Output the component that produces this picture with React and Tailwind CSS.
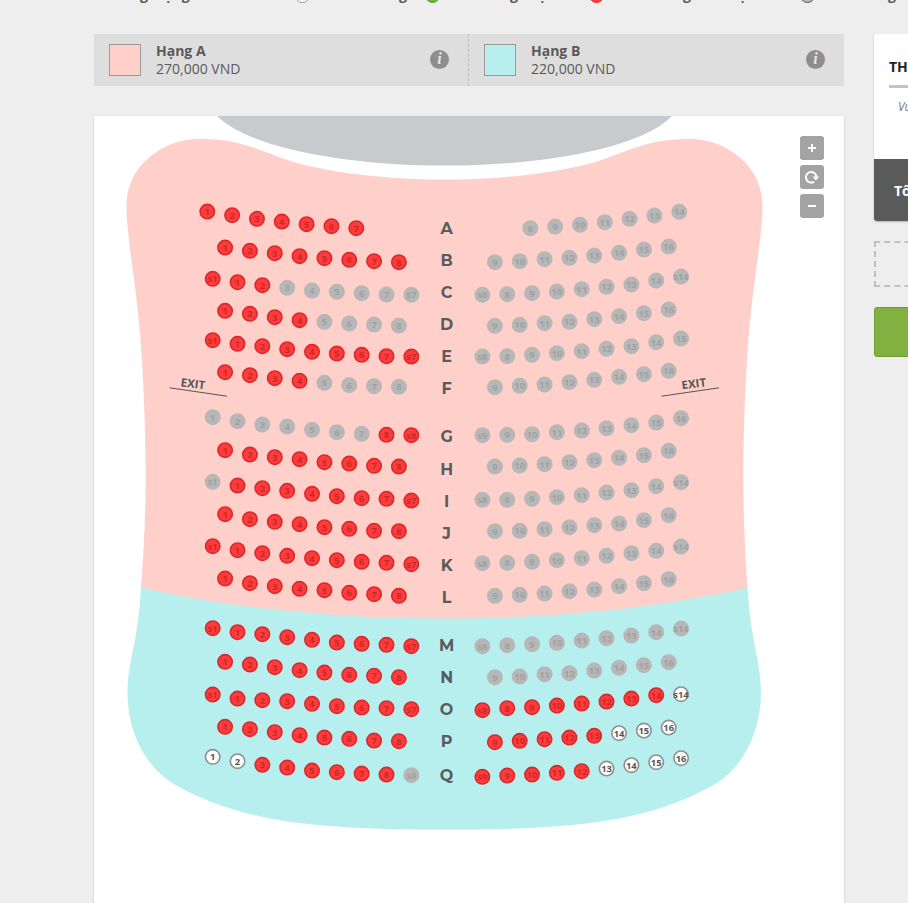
const LEFT_EVEN = 225.1;
const LEFT_ODD = 212.7;
const RIGHT_EVEN = 494.9;
const RIGHT_ODD = 482.4;
const STEP = 24.83;

const nums = (from, to) => Array.from({ length: to - from + 1 }, (_, i) => String(from + i));

const EVEN_L = nums(1, 8);
const EVEN_R = nums(9, 16);
const ODD_L = ['s1', ...nums(1, 7), 's7'];
const ODD_R = ['s8', ...nums(8, 14), 's14'];

// Status strings hold one letter for each seat: r = sold, g = locked, w = free.
// Heights are thirds of a pixel below the top of the block the row belongs to.
const ROWS = [
  { name: 'A', y: 228.7, top: 195,
    left: { x: 207.3, seats: nums(1, 7), status: 'rrrrrrr', ys: [49, 60, 71, 79, 87, 93, 99] },
    right: { x: 530.3, seats: nums(8, 14), status: 'ggggggg', ys: [99, 94, 89, 81, 71, 61, 50] } },
  { name: 'B', y: 260.7, top: 195,
    left: { x: LEFT_EVEN, seats: EVEN_L, status: 'rrrrrrrr', ys: [157, 167, 174, 183, 189, 194, 198, 201] },
    right: { x: RIGHT_EVEN, seats: EVEN_R, status: 'gggggggg', ys: [201, 198, 192, 188, 181, 173, 163, 154] } },
  { name: 'C', y: 292.7, top: 195,
    left: { x: LEFT_ODD, seats: ODD_L, status: 'rrrgggggg', ys: [251, 261, 270, 278, 286, 290, 294, 298, 299] },
    right: { x: RIGHT_ODD, seats: ODD_R, status: 'ggggggggg', ys: [299, 297, 294, 289, 282, 275, 268, 256, 244] } },
  { name: 'D', y: 324.7, top: 195,
    left: { x: LEFT_EVEN, seats: EVEN_L, status: 'rrrrgggg', ys: [347, 356, 366, 375, 380, 385, 388, 391] },
    right: { x: RIGHT_EVEN, seats: EVEN_R, status: 'gggggggg', ys: [392, 389, 384, 380, 372, 363, 354, 343] } },
  { name: 'E', y: 356.7, top: 195,
    left: { x: LEFT_ODD, seats: ODD_L, status: 'rrrrrrrrr', ys: [435, 446, 453, 462, 470, 475, 479, 483, 484] },
    right: { x: RIGHT_ODD, seats: ['s8', ...nums(8, 15)], status: 'ggggggggg', ys: [484, 483, 479, 474, 468, 461, 453, 441, 430] } },
  { name: 'F', y: 388.7, top: 195,
    left: { x: LEFT_EVEN, seats: EVEN_L, status: 'rrrrgggg', ys: [531, 540, 549, 557, 563, 570, 573, 575] },
    right: { x: RIGHT_EVEN, seats: EVEN_R, status: 'gggggggg', ys: [576, 572, 568, 561, 554, 545, 537, 527] } },
  { name: 'G', y: 436.7, top: 400,
    left: { x: LEFT_ODD, seats: [...nums(1, 8), 's8'], status: 'gggggggrr', ys: [51, 63, 73, 79, 89, 96, 101, 104, 105] },
    right: { x: RIGHT_ODD, seats: ['s9', ...nums(9, 16)], status: 'ggggggggg', ys: [105, 104, 102, 96, 91, 84, 75, 67, 54] } },
  { name: 'H', y: 469.7, top: 400,
    left: { x: LEFT_EVEN, seats: EVEN_L, status: 'rrrrrrrr', ys: [150, 163, 171, 177, 186, 190, 197, 199] },
    right: { x: RIGHT_EVEN, seats: EVEN_R, status: 'gggggggg', ys: [199, 196, 192, 186, 180, 173, 165, 152] } },
  { name: 'I', y: 501.7, top: 400,
    left: { x: LEFT_ODD, seats: ODD_L, status: 'grrrrrrrr', ys: [245, 256, 264, 272, 281, 288, 294, 296, 301] },
    right: { x: RIGHT_ODD, seats: ODD_R, status: 'ggggggggg', ys: [299, 299, 296, 291, 285, 277, 270, 258, 246] } },
  { name: 'J', y: 533.7, top: 400,
    left: { x: LEFT_EVEN, seats: EVEN_L, status: 'rrrrrrrr', ys: [342, 357, 365, 372, 381, 386, 392, 393] },
    right: { x: RIGHT_EVEN, seats: EVEN_R, status: 'gggggggg', ys: [393, 392, 387, 381, 375, 370, 360, 345] } },
  { name: 'K', y: 565.7, top: 400,
    left: { x: LEFT_ODD, seats: ODD_L, status: 'rrrrrrrrr', ys: [438, 450, 459, 467, 474, 480, 485, 488, 492] },
    right: { x: RIGHT_ODD, seats: ODD_R, status: 'ggggggggg', ys: [489, 488, 485, 480, 474, 467, 459, 452, 439] } },
  { name: 'L', y: 597.7, top: 400,
    left: { x: LEFT_EVEN, seats: EVEN_L, status: 'rrrrrrrr', ys: [535, 549, 558, 566, 570, 578, 582, 587] },
    right: { x: RIGHT_EVEN, seats: EVEN_R, status: 'gggggggg', ys: [587, 584, 580, 573, 568, 558, 549, 537] } },
  { name: 'M', y: 645.7, top: 610,
    left: { x: LEFT_ODD, seats: ODD_L, status: 'rrrrrrrrr', ys: [54, 66, 72, 81, 89, 97, 101, 104, 108] },
    right: { x: RIGHT_ODD, seats: ODD_R, status: 'ggggggggg', ys: [108, 105, 102, 98, 91, 84, 76, 66, 55] } },
  { name: 'N', y: 677.7, top: 610,
    left: { x: LEFT_EVEN, seats: EVEN_L, status: 'rrrrrrrr', ys: [155, 163, 171, 180, 187, 194, 197, 201] },
    right: { x: RIGHT_EVEN, seats: EVEN_R, status: 'gggggggg', ys: [201, 199, 192, 189, 181, 173, 165, 156] } },
  { name: 'O', y: 709.7, top: 610,
    left: { x: LEFT_ODD, seats: ODD_L, status: 'rrrrrrrrr', ys: [253, 265, 270, 273, 281, 288, 292, 294, 297] },
    right: { x: RIGHT_ODD, seats: ODD_R, status: 'rrrrrrrrw', ys: [300, 294, 291, 286, 280, 274, 265, 255, 252] } },
  { name: 'P', y: 741.7, top: 610,
    left: { x: LEFT_EVEN, seats: EVEN_L, status: 'rrrrrrrr', ys: [350, 357, 366, 375, 382, 386, 391, 393] },
    right: { x: RIGHT_EVEN, seats: EVEN_R, status: 'rrrrrwww', ys: [396, 392, 387, 382, 377, 369, 361, 352] } },
  { name: 'Q', y: 775.2, top: 610,
    left: { x: LEFT_ODD, seats: [...nums(1, 8), 's8'], status: 'wwrrrrrrg', ys: [440, 453, 464, 472, 481, 486, 490, 493, 495] },
    right: { x: RIGHT_ODD, seats: ['s9', ...nums(9, 16)], status: 'rrrrrwwww', ys: [500, 496, 493, 488, 483, 475, 465, 456, 444] } },
];

const SEAT_CIRCLE = {
  r: 'fill-[#ff3b3b] stroke-[#d9292c]',
  g: 'fill-[#b7b7b7] stroke-[#b7b7b7]',
  w: 'fill-white stroke-[#8f8f8f]',
};
const SEAT_TEXT = {
  r: 'fill-[#c9282b]',
  g: 'fill-[#a1a1a1]',
  w: 'fill-[#555555]',
};

function Seat({ x, y, label, status }) {
  return (
    <g>
      <circle cx={x} cy={y + 0.2} r="7.2" strokeWidth="1.6" className={SEAT_CIRCLE[status]} />
      <text x={x} y={y + 3.8} textAnchor="middle" className={`text-[9.4px] font-bold ${SEAT_TEXT[status]}`}>
        {label}
      </text>
    </g>
  );
}

function SeatMap() {
  return (
    <svg width="750" height="787" viewBox="94 116 750 787" className="block font-['Open_Sans',sans-serif]">
      <path
        className="fill-[#c7cbce]"
        d="M217 116 C250 149 350 165.6 446 165.6 C540 165.6 640 149 672 116 Z"
      />
      <path
        className="fill-[#ffd0ca]"
        d="M126.5 205 C126.5 168 160 139 200 139 C250 139 265 156 309 166 C350 175.500 400 179.600 444.500 179.600 C489 179.600 539 175.500 580 166 C624 156 639 139 689 139 C729 139 762.500 168 762.500 205 C762.500 240 751 290 747 360 C742 450 742 510 747.500 588 L700 625 L190 625 L141 588 C147 510 147 450 142 360 C138 290 126.500 240 126.500 205 Z"
      />
      <path
        className="fill-[#b6efee]"
        d="M141 587.500 C225 607 330 618.500 444.500 618.500 C560 618.500 664 607 747.500 587.500 C751 645 761 660 761 694 C760 733 744 765 717 783 C650 822 575 829.600 444.500 829.600 C314 829.600 239 822 172 783 C145 765 128 733 127.500 694 C127.500 660 138 645 141 587.500 Z"
      />

      <g className="fill-[#555555] text-[11.5px] font-bold" textAnchor="middle">
        <text transform="translate(192.500 387.800) rotate(7)">EXIT</text>
        <text transform="translate(694.300 387.800) rotate(-7)">EXIT</text>
      </g>
      <path className="fill-none stroke-[#555555]" d="M169.500 387.800 L227 396.200 M661.500 396.200 L719 387.800" />

      {ROWS.map((row) => (
        <g key={row.name}>
          <text
            x="446.6"
            y={row.y + 5.5}
            textAnchor="middle"
            className="fill-[#595b5d] font-['Montserrat','Inter',sans-serif] text-[16px] font-bold"
          >
            {row.name}
          </text>
          {[row.left, row.right].map((side) =>
            side.seats.map((label, i) => (
              <Seat
                key={`${side.x}-${label}-${i}`}
                x={side.x + i * STEP}
                y={row.top + side.ys[i] / 3}
                label={label}
                status={side.status[i]}
              />
            ))
          )}
        </g>
      ))}
    </svg>
  );
}

function InfoIcon() {
  return (
    <span className="flex size-[19px] items-center justify-center rounded-full bg-[#8e8e8e] font-['Liberation_Serif',serif] text-[16px] leading-none font-bold text-[#e4e4e4] italic">
      i
    </span>
  );
}

function TicketClass({ name, price, swatch, className }) {
  return (
    <div className={`flex h-full w-[375px] items-center pl-[15px] ${className}`}>
      <span className={`size-8 border border-[#999] ${swatch}`} />
      <div className="ml-[15px] flex-1 text-[14px] leading-[18px] text-[#5a5a5a]">
        <p className="font-bold">{name}</p>
        <p>{price}</p>
      </div>
      <div className="-mt-[2px]">
        <InfoIcon />
      </div>
    </div>
  );
}

function Legend() {
  return (
    <div className="h-[34px] overflow-hidden">
      <div className="-mt-[15px] flex h-[20px] items-center pl-[113px] text-[14px] leading-[20px] font-bold whitespace-nowrap text-[#5a5a5a]">
        <span className="w-[182px] shrink-0 pr-0">Bảng trạng thái</span>
        <div className="flex shrink-0">
          <LegendItem dot="ml-[0px] mr-[9px] border-[#999] bg-white" width="w-[130px]" label="Vé còn trống" />
          <LegendItem dot="mr-[12px] border-[#5a9e2c] bg-[#6cb33f]" width="w-[164px]" label="Ghế đang chọn" />
          <LegendItem dot="mr-[12px] border-[#e02a2a] bg-[#ff3b3b]" width="w-[211px]" label="Ghế không thể chọn" />
          <LegendItem dot="mr-[6px] border-[#5a5a5a] bg-[#b7b7b7]" width="w-[160px]" label="Ghế không bán" />
        </div>
      </div>
    </div>
  );
}

function LegendItem({ dot, width, label }) {
  return (
    <span className={`flex shrink-0 items-center ${width}`}>
      <span className={`size-[15px] shrink-0 rounded-full border ${dot}`} />
      {label}
    </span>
  );
}

const CONTROL = 'flex size-6 items-center justify-center rounded-[3px] bg-[#a3a3a3] text-white';

function MapControls() {
  return (
    <div className="absolute top-5 right-5 flex flex-col gap-[5px]">
      <button className={CONTROL} aria-label="+">
        <svg width="24" height="24" className="fill-none stroke-white stroke-2">
          <path d="M8 12H16M12 8V16" />
        </svg>
      </button>
      <button className={CONTROL} aria-label="reset">
        <svg width="24" height="24" className="fill-none stroke-white stroke-2">
          <path d="M14 16.800A5.300 5.300 0 1 1 16.500 11.800" />
          <path className="fill-white stroke-none" d="M12.600 11.600H19.200L15.900 15.400Z" />
        </svg>
      </button>
      <button className={CONTROL} aria-label="-">
        <svg width="24" height="24" className="fill-none stroke-white stroke-2">
          <path d="M8 12H16" />
        </svg>
      </button>
    </div>
  );
}

function Sidebar() {
  return (
    <aside className="w-[250px] shrink-0 whitespace-nowrap">
      <div className="rounded-[3px] shadow-[0_1px_2px_rgba(0,0,0,0.25)]">
        <div className="h-[125px] rounded-t-[3px] bg-white px-[15px] pt-[22px]">
          <h2 className="h-[32px] border-b-3 border-[#c4c4c4] text-[14px] leading-[22px] font-bold text-[#222]">
            THÔNG TIN ĐẶT VÉ
          </h2>
          <p className="pt-[9px] pl-[9px] text-[12px] leading-[20px] text-[#777] italic">Vui lòng chọn ghế</p>
        </div>
        <div className="flex h-[62px] items-center rounded-b-[3px] bg-[#5a5a5a] pl-5 text-[14px] font-bold text-white">
          Tổng cộng
        </div>
      </div>
      <div className="mt-5 h-[46px] border-2 border-dashed border-[#c0c0c0]" />
      <div className="mt-5 h-[50px] rounded-[3px] border border-[#6fa02f] bg-[#82b141]" />
    </aside>
  );
}

export default function App() {
  return (
    <div className="h-[903px] w-[908px] overflow-hidden bg-[#eeeeee] font-['Open_Sans','Noto_Sans',sans-serif]">
      <Legend />
      <div className="flex gap-[30px] pl-[94px]">
        <main className="w-[750px] shrink-0">
          <div className="flex h-[52px] bg-[#dedede]">
            <TicketClass
              name="Hạng A"
              price="270,000 VND"
              swatch="bg-[#ffd0ca]"
              className="border-r border-dashed border-[#bcbcbc] pr-[19px]"
            />
            <TicketClass name="Hạng B" price="220,000 VND" swatch="bg-[#b6efee]" className="pr-[19px]" />
          </div>
          <div className="relative mt-[30px] h-[800px] rounded-[2px] bg-white shadow-[0_1px_2px_rgba(0,0,0,0.25)]">
            <SeatMap />
            <MapControls />
          </div>
        </main>
        <Sidebar />
      </div>
    </div>
  );
}
